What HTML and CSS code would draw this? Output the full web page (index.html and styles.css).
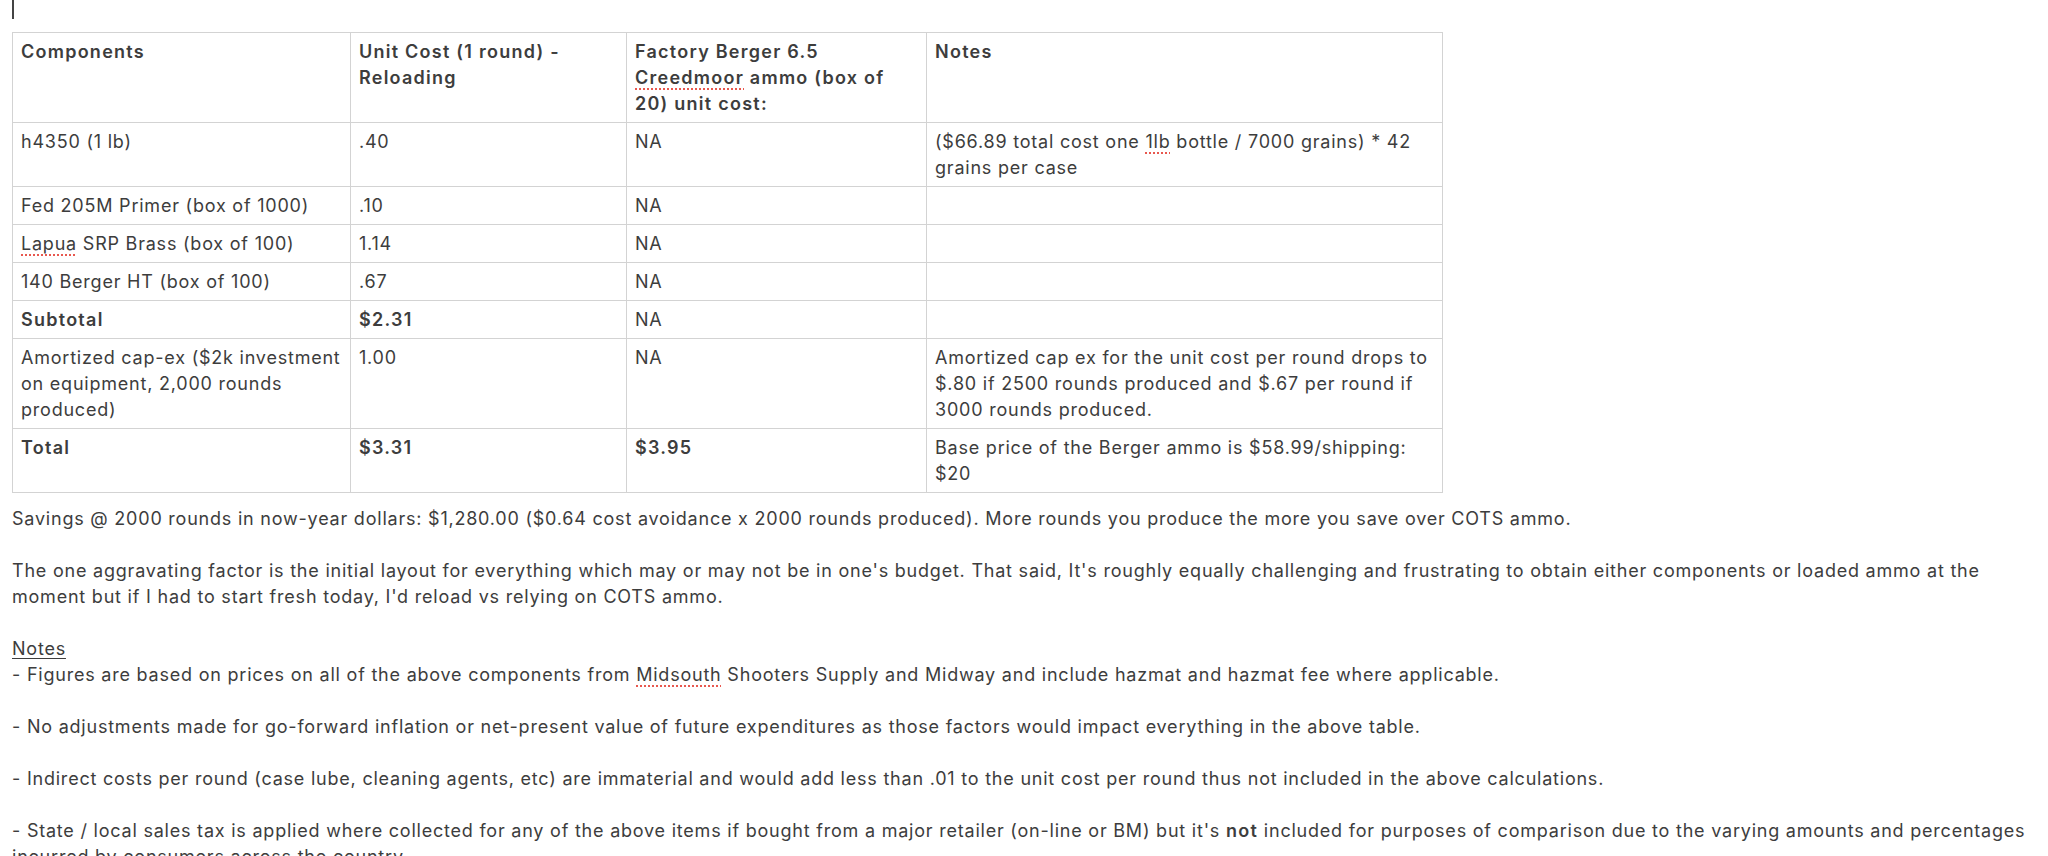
FILE: index.html
```html
<!DOCTYPE html>
<html>
<head>
<meta charset="utf-8">
<link rel="stylesheet" href="styles.css">
</head>
<body>
<div class="doc">
  <div class="caret-line"><span class="caret"></span></div>
  <table class="cost">
    <colgroup>
      <col class="c1"><col class="c2"><col class="c3"><col class="c4">
    </colgroup>
    <tr class="head">
      <td>Components</td>
      <td>Unit Cost (1 round) - Reloading</td>
      <td>Factory Berger 6.5 <span class="sp">Creedmoor</span> ammo (box of 20) unit cost:</td>
      <td>Notes</td>
    </tr>
    <tr>
      <td>h4350 (1 lb)</td>
      <td>.40</td>
      <td>NA</td>
      <td>($66.89 total cost one <span class="sp">1lb</span> bottle / 7000 grains) * 42 grains per case</td>
    </tr>
    <tr>
      <td>Fed 205M Primer (box of 1000)</td>
      <td>.10</td>
      <td>NA</td>
      <td></td>
    </tr>
    <tr>
      <td><span class="sp">Lapua</span> SRP Brass (box of 100)</td>
      <td>1.14</td>
      <td>NA</td>
      <td></td>
    </tr>
    <tr>
      <td>140 Berger HT (box of 100)</td>
      <td>.67</td>
      <td>NA</td>
      <td></td>
    </tr>
    <tr>
      <td><b>Subtotal</b></td>
      <td><b>$2.31</b></td>
      <td>NA</td>
      <td></td>
    </tr>
    <tr>
      <td>Amortized cap-ex ($2k investment on equipment, 2,000 rounds produced)</td>
      <td>1.00</td>
      <td>NA</td>
      <td>Amortized cap ex for the unit cost per round drops to $.80 if 2500 rounds produced and $.67 per round if 3000 rounds produced.</td>
    </tr>
    <tr>
      <td><b>Total</b></td>
      <td><b>$3.31</b></td>
      <td><b>$3.95</b></td>
      <td>Base price of the Berger ammo is $58.99/shipping: $20</td>
    </tr>
  </table>
  <div class="text">
    <p>Savings @ 2000 rounds in now-year dollars: $1,280.00 ($0.64 cost avoidance x 2000 rounds produced). More rounds you produce the more you save over COTS ammo.</p>
    <p class="blank"></p>
    <p>The one aggravating factor is the initial layout for everything which may or may not be in one's budget. That said, It's roughly equally challenging and frustrating to obtain either components or loaded ammo at the moment but if I had to start fresh today, I'd reload vs relying on COTS ammo.</p>
    <p class="blank"></p>
    <p><span class="ul">Notes</span></p>
    <p>- Figures are based on prices on all of the above components from <span class="sp">Midsouth</span> Shooters Supply and Midway and include hazmat and hazmat fee where applicable.</p>
    <p class="blank"></p>
    <p>- No adjustments made for go-forward inflation or net-present value of future expenditures as those factors would impact everything in the above table.</p>
    <p class="blank"></p>
    <p>- Indirect costs per round (case lube, cleaning agents, etc) are immaterial and would add less than .01 to the unit cost per round thus not included in the above calculations.</p>
    <p class="blank"></p>
    <p>- State / local sales tax is applied where collected for any of the above items if bought from a major retailer (on-line or BM) but it's <b>not</b> included for purposes of comparison due to the varying amounts and percentages incurred by consumers across the country.</p>
  </div>
</div>
</body>
</html>
```

FILE: styles.css
```css
html, body {
  margin: 0;
  padding: 0;
  background: #ffffff;
}
body {
  font-family: Inter, "Liberation Sans", sans-serif;
  font-size: 18px;
  letter-spacing: 0.78px;
  line-height: 26px;
  color: #3d3d3d;
}
.doc {
  padding: 0 12px;
}
.caret-line {
  height: 32px;
}
.caret {
  display: block;
  width: 2px;
  height: 19px;
  background: #444;
}
table.cost {
  border-collapse: collapse;
  table-layout: fixed;
  width: 1430px;
}
col.c1 { width: 338px; }
col.c2 { width: 276px; }
col.c3 { width: 300px; }
col.c4 { width: 516px; }
table.cost td {
  border: 1px solid #d3d3d3;
  padding: 6px 7px 5px 8px;
  vertical-align: top;
}
tr.head td, table.cost b, b {
  font-weight: 600;
  letter-spacing: 1.25px;
}
.sp {
  text-decoration: underline dotted #e8584f;
  text-decoration-thickness: 2px;
  text-underline-offset: 4px;
}
.ul {
  text-decoration: underline;
  text-underline-offset: 3px;
}
.text {
  padding-top: 13px;
}
.text p {
  margin: 0;
}
.text p.blank {
  height: 26px;
}
```
